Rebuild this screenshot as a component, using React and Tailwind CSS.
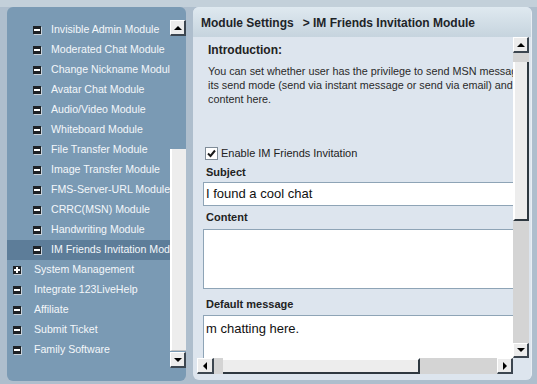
import React from "react";

const F = { fontFamily: '"Liberation Sans", Arial, sans-serif' };

function Box({ plus }) {
  return (
    <span className="relative inline-flex w-[8px] h-[8px] bg-[#1e2226] items-center justify-center shrink-0 shadow-[1px_1px_0_#c9d3dc]">
      <span className="absolute w-[6px] h-[2px] bg-white" />
      {plus && <span className="absolute w-[2px] h-[6px] bg-white" />}
    </span>
  );
}

function Tri({ dir }) {
  const cls = {
    up: "border-l-[4px] border-r-[4px] border-b-[4px] border-l-transparent border-r-transparent border-b-black",
    down: "border-l-[4px] border-r-[4px] border-t-[4px] border-l-transparent border-r-transparent border-t-black",
    left: "border-t-[4px] border-b-[4px] border-r-[4px] border-t-transparent border-b-transparent border-r-black",
    right: "border-t-[4px] border-b-[4px] border-l-[4px] border-t-transparent border-b-transparent border-l-black",
  }[dir];
  return <span className={`w-0 h-0 ${cls}`} />;
}

function Btn({ dir, className = "" }) {
  return (
    <div className={`flex items-center justify-center bg-[#ececec] border-t border-l border-t-white border-l-white border-r-2 border-b-2 border-r-[#3c4650] border-b-[#3c4650] ${className}`}>
      <Tri dir={dir} />
    </div>
  );
}

const subs = [
  "Invisible Admin Module",
  "Moderated Chat Module",
  "Change Nickname Module",
  "Avatar Chat Module",
  "Audio/Video Module",
  "Whiteboard Module",
  "File Transfer Module",
  "Image Transfer Module",
  "FMS-Server-URL Module",
  "CRRC(MSN) Module",
  "Handwriting Module",
];
const tops = [
  ["System Management", true],
  ["Integrate 123LiveHelp", false],
  ["Affiliate", false],
  ["Submit Ticket", false],
  ["Family Software", false],
];

export default function App() {
  return (
    <div className="w-[537px] h-[384px] bg-[#aebecd] overflow-hidden relative" style={F}>
      <div className="h-[7px] bg-[#c3d0da]" />
      <div className="flex gap-[7px] pl-[7px]">
        {/* Left panel */}
        <div className="w-[179px] h-[374px] rounded-[6px] bg-[#7a9ab4] flex overflow-hidden">
          <div className="w-[163px] pt-[13px] flex flex-col text-[10.6px] text-[#f4f7fa]">
            {subs.map((s) => (
              <div key={s} className="h-[20px] flex items-center pl-[26px] whitespace-nowrap overflow-hidden">
                <Box />
                <span className="ml-[10px]">{s}</span>
              </div>
            ))}
            <div className="h-[20px] flex items-center pl-[26px] whitespace-nowrap overflow-hidden bg-[#5d7d99]">
              <Box />
              <span className="ml-[10px]">IM Friends Invitation Module</span>
            </div>
            {tops.map(([s, p]) => (
              <div key={s} className="h-[20px] flex items-center pl-[6px] whitespace-nowrap overflow-hidden">
                <Box plus={p} />
                <span className="ml-[13px]">{s}</span>
              </div>
            ))}
          </div>
          <div className="w-[16px] pt-[13px] flex flex-col">
            <Btn dir="up" className="h-[16px] w-[16px]" />
            <div className="h-[113px]" />
            <div className="h-[202px] bg-[#ededed] border-l-2 border-l-white border-b border-b-[#c0c0c0]" />
            <Btn dir="down" className="h-[16px] w-[16px] mt-[1px]" />
          </div>
        </div>

        {/* Right panel */}
        <div className="w-[339px] h-[373px] rounded-[6px] bg-[#dde5ee] flex flex-col overflow-hidden border-r border-r-[#e8eef4]">
          <div className="h-[30px] shrink-0 bg-gradient-to-b from-[#dfe9f0] to-[#c6d4de] flex items-center pl-[8px] pt-[2px] text-[12px] font-bold text-[#1e2428] whitespace-nowrap">
            Module Settings<span className="ml-[9px] font-bold">&gt; IM Friends Invitation Module</span>
          </div>
          <div className="flex pl-[4px]">
            <div className="w-[316px] h-[321px] overflow-hidden bg-[#dde5ee] text-[#222]">
              <div className="pl-[11px] mt-[6px] h-[14px] leading-[14px] text-[12px] font-bold">Introduction:</div>
              <div className="pl-[11px] mt-[7px] text-[10.8px] leading-[14px] whitespace-nowrap text-[#2a2a2a]">
                You can set whether user has the privilege to send MSN messages,<br />
                its send mode (send via instant message or send via email) and<br />
                content here.
              </div>
              <div className="mt-[40px] pl-[8px] h-[14px] flex items-center text-[11px]">
                <span className="w-[13px] h-[13px] bg-white border border-[#7f8c98] flex items-center justify-center">
                  <svg width="9" height="9" viewBox="0 0 9 9">
                    <path d="M1 4.5 L3.5 7 L8 1.5" stroke="#1a1a1a" strokeWidth="2" fill="none" />
                  </svg>
                </span>
                <span className="ml-[3px]">Enable IM Friends Invitation</span>
              </div>
              <div className="mt-[5px] pl-[9px] h-[14px] leading-[14px] text-[11px] font-bold">Subject</div>
              <div className="mt-[3px] ml-[6px] h-[24px] bg-white border-t border-l border-b border-[#8ea4b6] flex items-center pl-[2px] text-[13px] text-[#111] whitespace-nowrap">
                I found a cool chat
              </div>
              <div className="mt-[4px] pl-[9px] h-[14px] leading-[14px] text-[11px] font-bold">Content</div>
              <div className="mt-[5px] ml-[6px] h-[60px] bg-white border-t border-l border-b border-[#8ea4b6]" />
              <div className="mt-[8px] pl-[9px] h-[14px] leading-[14px] text-[11px] font-bold">Default message</div>
              <div className="mt-[4px] ml-[6px] h-[60px] bg-white border-t border-l border-[#8ea4b6] pl-[2px] pt-[3px] text-[13px] text-[#111] whitespace-nowrap">
                m chatting here.
              </div>
            </div>
            <div className="w-[16px] h-[321px] flex flex-col bg-[#d4d4d4]">
              <Btn dir="up" className="h-[16px]" />
              <div className="h-[9px]" />
              <div className="h-[159px] bg-[#ededed] border-l-2 border-l-white border-r-2 border-r-[#2e3840] border-b-2 border-b-[#2e3840]" />
              <div className="flex-1" />
              <Btn dir="down" className="h-[15px]" />
            </div>
          </div>
          <div className="flex pl-[4px] h-[16px]">
            <div className="w-[316px] flex bg-[#d4d4d4]">
              <Btn dir="left" className="w-[17px]" />
              <div className="w-[9px]" />
              <div className="w-[197px] bg-[#ededed] border-t-2 border-t-white border-r-2 border-r-[#2e3840] border-b-2 border-b-[#2e3840]" />
              <div className="flex-1" />
              <Btn dir="right" className="w-[16px]" />
            </div>
            <div className="w-[16px]" />
          </div>
        </div>
      </div>
    </div>
  );
}
